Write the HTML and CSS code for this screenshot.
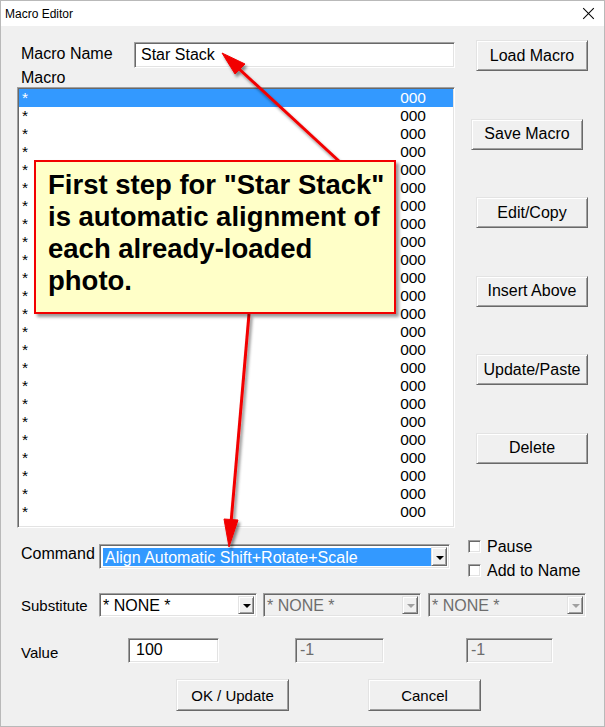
FILE: index.html
```html
<!DOCTYPE html>
<html lang="en">
  <head>
    <meta charset="utf-8">
    <title>Macro Editor</title>
    <link rel="stylesheet" href="styles.css">
  </head>
  <body>
    <div class="window">
      <div class="titlebar">
        <span class="title">Macro Editor</span>
        <span class="close"></span>
      </div>

      <div class="client">
        <div class="top">
          <div class="left">
            <div class="name-row">
              <span class="lbl name-lbl">Macro Name</span>
              <div class="edit name-edit">Star Stack</div>
            </div>
            <div class="lbl macro-lbl">Macro</div>
            <div class="listbox">
              <div class="row sel"><span>*</span><span class="val">000</span></div>
              <div class="row"><span>*</span><span class="val">000</span></div>
              <div class="row"><span>*</span><span class="val">000</span></div>
              <div class="row"><span>*</span><span class="val">000</span></div>
              <div class="row"><span>*</span><span class="val">000</span></div>
              <div class="row"><span>*</span><span class="val">000</span></div>
              <div class="row"><span>*</span><span class="val">000</span></div>
              <div class="row"><span>*</span><span class="val">000</span></div>
              <div class="row"><span>*</span><span class="val">000</span></div>
              <div class="row"><span>*</span><span class="val">000</span></div>
              <div class="row"><span>*</span><span class="val">000</span></div>
              <div class="row"><span>*</span><span class="val">000</span></div>
              <div class="row"><span>*</span><span class="val">000</span></div>
              <div class="row"><span>*</span><span class="val">000</span></div>
              <div class="row"><span>*</span><span class="val">000</span></div>
              <div class="row"><span>*</span><span class="val">000</span></div>
              <div class="row"><span>*</span><span class="val">000</span></div>
              <div class="row"><span>*</span><span class="val">000</span></div>
              <div class="row"><span>*</span><span class="val">000</span></div>
              <div class="row"><span>*</span><span class="val">000</span></div>
              <div class="row"><span>*</span><span class="val">000</span></div>
              <div class="row"><span>*</span><span class="val">000</span></div>
              <div class="row"><span>*</span><span class="val">000</span></div>
              <div class="row"><span>*</span><span class="val">000</span></div>
            </div>
          </div>

          <div class="side">
            <button class="btn">Load Macro</button>
            <button class="btn nudge">Save Macro</button>
            <button class="btn">Edit/Copy</button>
            <button class="btn">Insert Above</button>
            <button class="btn">Update/Paste</button>
            <button class="btn">Delete</button>
          </div>
        </div>

        <div class="command-row">
          <span class="lbl cmd-lbl">Command</span>
          <div class="combo cmd">
            <span class="field"><span class="hl">Align Automatic Shift+Rotate+Scale</span></span>
            <span class="drop"></span>
          </div>
          <div class="checks">
            <div class="check"><span class="box"></span>Pause</div>
            <div class="check"><span class="box"></span>Add to Name</div>
          </div>
        </div>

        <div class="subst-row">
          <span class="lbl">Substitute</span>
          <div class="combo sub">
            <span class="field">* NONE *</span>
            <span class="drop"></span>
          </div>
          <div class="combo sub off">
            <span class="field">* NONE *</span>
            <span class="drop"></span>
          </div>
          <div class="combo sub off third">
            <span class="field">* NONE *</span>
            <span class="drop"></span>
          </div>
        </div>

        <div class="value-row">
          <span class="lbl value-lbl">Value</span>
          <div class="edit val1">100</div>
          <div class="edit off val2">-1</div>
          <div class="edit off val3">-1</div>
        </div>

        <div class="actions">
          <button class="btn wide">OK / Update</button>
          <button class="btn wide cancel">Cancel</button>
        </div>
      </div>

      <!-- annotation: note box and the two arrows pointing at the fields -->
      <svg class="arrows" width="605" height="727" viewBox="0 0 605 727">
        <defs>
          <filter id="shade" x="-20%" y="-20%" width="140%" height="140%">
            <feDropShadow dx="2" dy="3" stdDeviation="1.4" flood-color="#000" flood-opacity="0.45"/>
          </filter>
        </defs>
        <g filter="url(#shade)" fill="#f20000" stroke="#f20000">
          <line x1="339" y1="161" x2="236" y2="66" stroke-width="3"/>
          <polygon points="221,52 244,63 234,73" stroke-width="1"/>
          <line x1="248" y1="313" x2="230" y2="522" stroke-width="3"/>
          <polygon points="228,546 223,518 237,519" stroke-width="1"/>
        </g>
      </svg>
      <div class="callout">First step for "Star Stack"<br>is automatic alignment of<br>each already-loaded<br>photo.</div>
    </div>
  </body>
</html>
```

FILE: styles.css
```css
* {margin: 0; padding: 0; box-sizing: border-box;}

body {
	background: #f0f0f0;
	font: 16px "Liberation Sans", Arial, sans-serif;
	color: #000;
}

.window {
	position: relative;
	width: 605px;
	height: 727px;
	background: #f0f0f0;
	border: 1px solid #b9b9b9;
	overflow: hidden;
}

/* title bar */
.titlebar {
	height: 25px;
	background: #fff;
	display: flex;
	align-items: center;
	justify-content: space-between;
	padding: 0 10px 0 4px;
}
.title {font-size: 12px;}
.close {
	position: relative;
	width: 11px;
	height: 11px;
}
.close::before, .close::after {
	content: "";
	position: absolute;
	left: 5px;
	top: -2px;
	width: 1px;
	height: 15px;
	background: #000;
	transform: rotate(45deg);
}
.close::after {transform: rotate(-45deg);}

.client {padding: 14px 0 0 16px;}

.lbl {
	display: block;
	padding-left: 4px;
	white-space: nowrap;
}

/* sunken 3d edges (edit, list, combo, checkbox) */
.edit, .listbox, .combo, .box {
	border: 1px solid;
	border-color: #a0a0a0 #fff #fff #a0a0a0;
	box-shadow: inset 1px 1px 0 #696969, inset -1px -1px 0 #e3e3e3;
	background: #fff;
}

/* raised 3d edges */
.btn, .drop {
	border: 1px solid;
	border-color: #e3e3e3 #696969 #696969 #e3e3e3;
	box-shadow: inset 1px 1px 0 #fff, inset -1px -1px 0 #a0a0a0;
	background: #f0f0f0;
}

.btn {
	font: 16px "Liberation Sans", Arial, sans-serif;
	color: #000;
	width: 112px;
	height: 31px;
	flex: none;
}

.top {display: flex;}
.left {width: 438px; padding-top: 2px;}

.name-row {display: flex; align-items: center; height: 26px;}
.name-lbl {width: 117px; margin-top: -2px;}
.name-edit {
	width: 321px;
	height: 26px;
	line-height: 24px;
	padding-left: 6px;
}
.macro-lbl {height: 19px; line-height: 19px;}

.listbox {
	height: 441px;
	padding: 1px;
}
.row {
	display: flex;
	height: 18px;
	line-height: 18px;
	padding: 0 27px 0 3px;
	font-size: 15.5px;
}
.row .val {margin-left: auto;}
.row.sel {background: #3399ff; color: #fff;}

.side {
	display: flex;
	flex-direction: column;
	gap: 47.6px;
	margin-left: 21px;
}
.side .nudge {margin-left: -5px;}

/* combo boxes */
.combo {
	display: flex;
	padding: 2px;
	flex: none;
}
.combo .field {
	flex: 1;
	padding-left: 1px;
	white-space: nowrap;
	overflow: hidden;
}
.combo .drop {
	position: relative;
	width: 16px;
	flex: none;
}
.combo .drop::after {
	content: "";
	position: absolute;
	left: 4px;
	top: 50%;
	margin-top: -1px;
	border: 4px solid transparent;
	border-top: 4px solid #000;
	border-bottom: 0;
}
.combo.off {background: #f0f0f0; color: #6d6d6d;}
.combo.off .drop::after {border-top-color: #a0a0a0;}

.command-row {
	display: flex;
	align-items: flex-start;
	margin-top: 12px;
}
.cmd-lbl {width: 82px; line-height: 25px; margin-top: 1px;}
.cmd {width: 351px; height: 25px; margin-top: 4px;}
.cmd .field {padding: 1px 0 0 1px;}
.cmd .hl {
	display: block;
	height: 19px;
	line-height: 19px;
	background: #3399ff;
	color: #fff;
	padding-left: 2px;
}

.checks {
	display: flex;
	flex-direction: column;
	gap: 11px;
	margin-left: 18px;
}
.check {
	display: flex;
	align-items: center;
	height: 13px;
	line-height: 13px;
	white-space: nowrap;
}
.box {
	width: 13px;
	height: 13px;
	margin-right: 6px;
}

.subst-row {
	display: flex;
	align-items: center;
	height: 24px;
	margin-top: 16px;
}
.subst-row .lbl {width: 82px; font-size: 15px;}
.sub {width: 158px; height: 24px; line-height: 20px; margin-right: 6px;}
.sub.third {margin-left: 1px;}

.value-row {
	display: flex;
	align-items: center;
	height: 25px;
	margin-top: 21px;
}
.value-lbl {width: 111px; font-size: 15px; margin-top: 3px;}
.value-row .edit {
	height: 25px;
	line-height: 22px;
	padding-left: 7px;
}
.val1 {width: 91px;}
.val2 {width: 89px; margin-left: 76px;}
.val3 {width: 87px; margin-left: 82px;}
.edit.off {background: #f0f0f0; color: #6d6d6d; padding-left: 4px;}

.actions {
	display: flex;
	margin-top: 16px;
	padding-left: 159px;
}
.btn.wide {width: 113px; height: 32px; font-size: 15px;}
.btn.cancel {margin-left: 79px;}

/* note box over the list */
.arrows {
	position: absolute;
	left: 0;
	top: 0;
	pointer-events: none;
}
.callout {
	position: absolute;
	left: 33px;
	top: 159px;
	width: 362px;
	height: 154px;
	padding: 7px 0 0 12px;
	background: #ffffc8;
	border: 2px solid #f20000;
	box-shadow: 3px 3px 3px rgba(0, 0, 0, 0.4);
	font: bold 27.5px/32px "Liberation Sans", Arial, sans-serif;
	white-space: nowrap;
}
```
